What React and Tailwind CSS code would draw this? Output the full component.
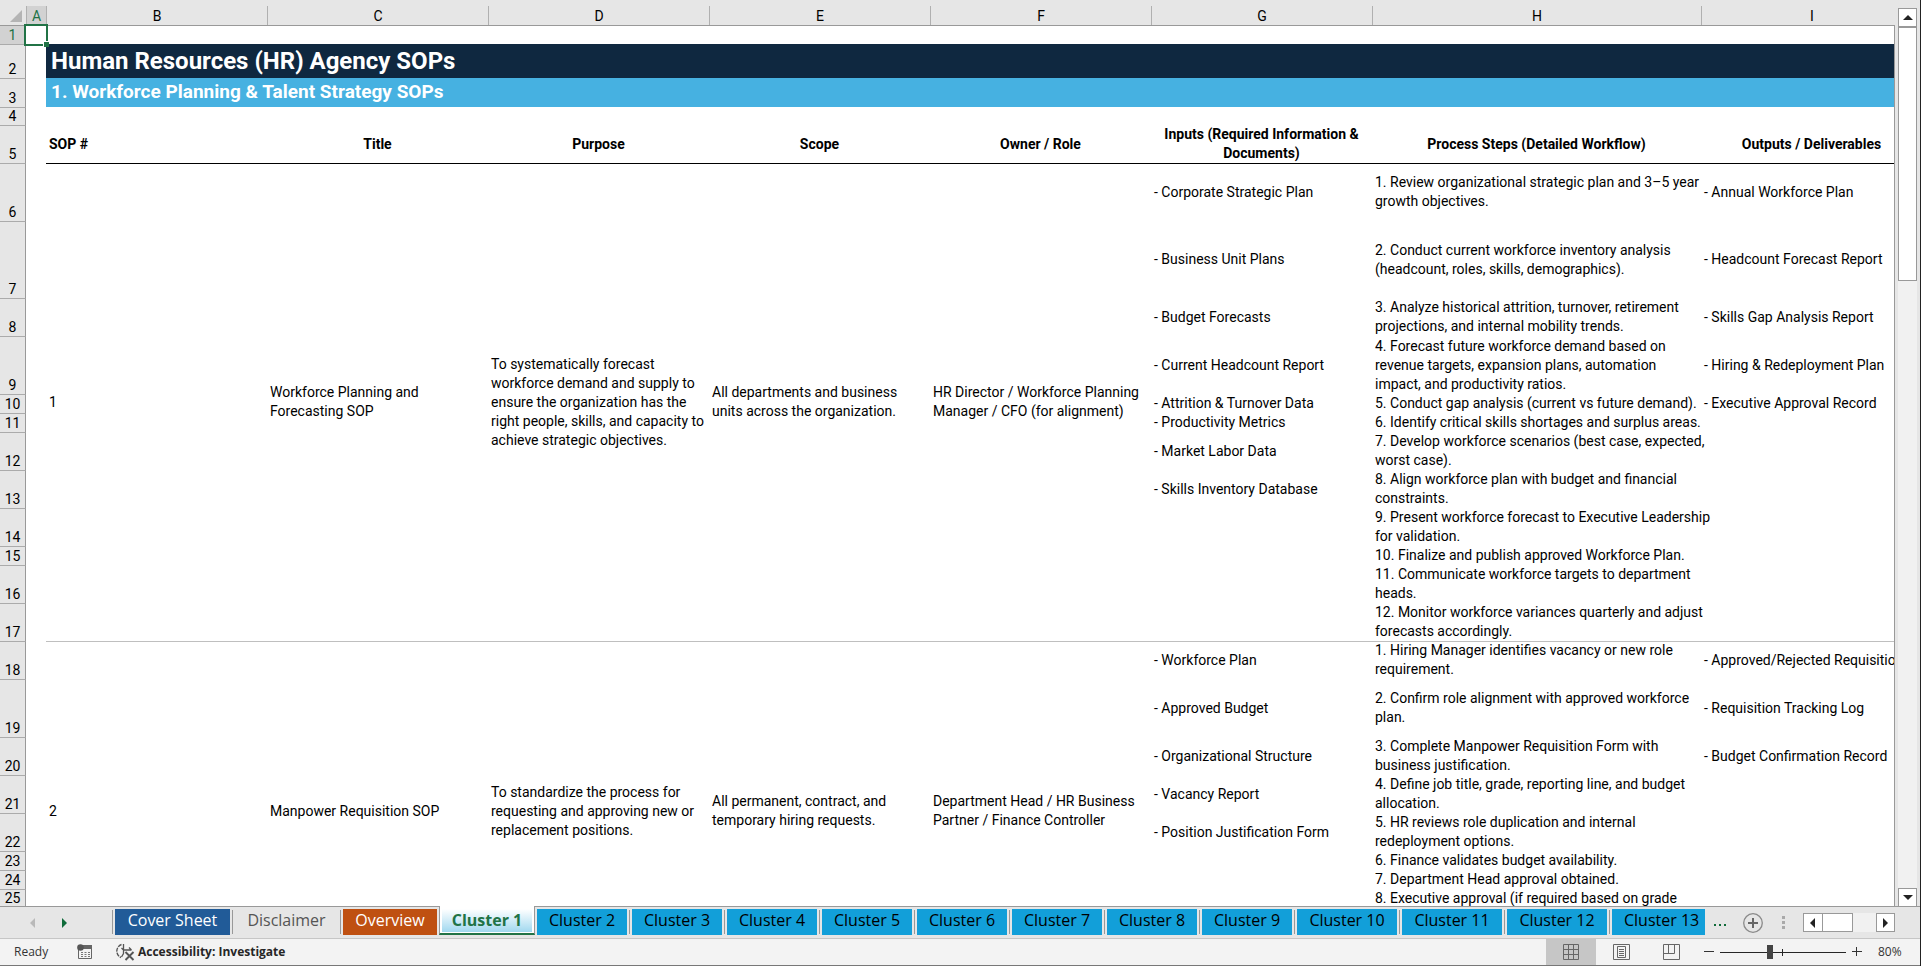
import React from "react";
import clsx from "clsx";

const COLUMNS = ["A", "B", "C", "D", "E", "F", "G", "H", "I"];

const HEADINGS = [
  "Title",
  "Purpose",
  "Scope",
  "Owner / Role",
  "Inputs (Required Information &\nDocuments)",
  "Process Steps (Detailed Workflow)",
  "Outputs / Deliverables",
];

// Each SOP is one merged block (B:F) next to one row per process step (G:I)
const SOPS = [
  {
    id: 1,
    title: "Workforce Planning and\nForecasting SOP",
    purpose:
      "To systematically forecast\nworkforce demand and supply to\nensure the organization has the\nright people, skills, and capacity to\nachieve strategic objectives.",
    scope: "All departments and business\nunits across the organization.",
    owner: "HR Director / Workforce Planning\nManager / CFO (for alignment)",
    rows: [
      { n: 6, h: "h-[58px]", input: "- Corporate Strategic Plan", step: "1. Review organizational strategic plan and 3–5 year\ngrowth objectives.", output: "- Annual Workforce Plan" },
      { n: 7, h: "h-[77px]", input: "- Business Unit Plans", step: "2. Conduct current workforce inventory analysis\n(headcount, roles, skills, demographics).", output: "- Headcount Forecast Report" },
      { n: 8, h: "h-[38px]", input: "- Budget Forecasts", step: "3. Analyze historical attrition, turnover, retirement\nprojections, and internal mobility trends.", output: "- Skills Gap Analysis Report" },
      { n: 9, h: "h-[58px]", input: "- Current Headcount Report", step: "4. Forecast future workforce demand based on\nrevenue targets, expansion plans, automation\nimpact, and productivity ratios.", output: "- Hiring & Redeployment Plan" },
      { n: 10, h: "h-[19px]", input: "- Attrition & Turnover Data", step: "5. Conduct gap analysis (current vs future demand).", output: "- Executive Approval Record" },
      { n: 11, h: "h-[19px]", input: "- Productivity Metrics", step: "6. Identify critical skills shortages and surplus areas." },
      { n: 12, h: "h-[38px]", input: "- Market Labor Data", step: "7. Develop workforce scenarios (best case, expected,\nworst case)." },
      { n: 13, h: "h-[38px]", input: "- Skills Inventory Database", step: "8. Align workforce plan with budget and financial\nconstraints." },
      { n: 14, h: "h-[38px]", step: "9. Present workforce forecast to Executive Leadership\nfor validation." },
      { n: 15, h: "h-[19px]", step: "10. Finalize and publish approved Workforce Plan." },
      { n: 16, h: "h-[38px]", step: "11. Communicate workforce targets to department\nheads." },
      { n: 17, h: "h-[38px]", step: "12. Monitor workforce variances quarterly and adjust\nforecasts accordingly." },
    ],
  },
  {
    id: 2,
    title: "Manpower Requisition SOP",
    purpose: "To standardize the process for\nrequesting and approving new or\nreplacement positions.",
    scope: "All permanent, contract, and\ntemporary hiring requests.",
    owner: "Department Head / HR Business\nPartner / Finance Controller",
    rows: [
      { n: 18, h: "h-[38px]", input: "- Workforce Plan", step: "1. Hiring Manager identifies vacancy or new role\nrequirement.", output: "- Approved/Rejected Requisition" },
      { n: 19, h: "h-[58px]", input: "- Approved Budget", step: "2. Confirm role alignment with approved workforce\nplan.", output: "- Requisition Tracking Log" },
      { n: 20, h: "h-[38px]", input: "- Organizational Structure", step: "3. Complete Manpower Requisition Form with\nbusiness justification.", output: "- Budget Confirmation Record" },
      { n: 21, h: "h-[38px]", input: "- Vacancy Report", step: "4. Define job title, grade, reporting line, and budget\nallocation." },
      { n: 22, h: "h-[38px]", input: "- Position Justification Form", step: "5. HR reviews role duplication and internal\nredeployment options." },
      { n: 23, h: "h-[19px]", step: "6. Finance validates budget availability." },
      { n: 24, h: "h-[19px]", step: "7. Department Head approval obtained." },
      { n: 25, h: "h-[92px]", top: true, step: "8. Executive approval (if required based on grade" },
    ],
  },
];

const TABS = [
  { name: "Cover Sheet", look: "w-[115px] bg-[#215b98] text-white" },
  { name: "Disclaimer", look: "w-[103px] text-[#555555]" },
  { name: "Overview", look: "w-[94px] bg-[#bf5011] text-white" },
  { name: "Cluster 1", active: true },
  { name: "Cluster 2", look: "w-[90px] bg-[#129fd9]", first: true },
  { name: "Cluster 3", look: "w-[90px] bg-[#129fd9]" },
  { name: "Cluster 4", look: "w-[90px] bg-[#129fd9]" },
  { name: "Cluster 5", look: "w-[90px] bg-[#129fd9]" },
  { name: "Cluster 6", look: "w-[90px] bg-[#129fd9]" },
  { name: "Cluster 7", look: "w-[90px] bg-[#129fd9]" },
  { name: "Cluster 8", look: "w-[90px] bg-[#129fd9]" },
  { name: "Cluster 9", look: "w-[90px] bg-[#129fd9]" },
  { name: "Cluster 10", look: "w-[100px] bg-[#129fd9]" },
  { name: "Cluster 11", look: "w-[100px] bg-[#129fd9]" },
  { name: "Cluster 12", look: "w-[100px] bg-[#129fd9]" },
  { name: "Cluster 13", look: "w-[93px] bg-[#129fd9] pl-3 text-left" },
];

const Arrow = ({ dir, className }) => {
  const shapes = {
    up: "0,7 10,7 5,2",
    down: "0,2 10,2 5,7",
    left: "7,0 7,10 2,5",
    right: "2,0 2,10 7,5",
  };
  return (
    <svg viewBox="0 0 10 10" className={clsx("size-[10px]", className)} fill="currentColor">
      <polygon points={shapes[dir]} />
    </svg>
  );
};

const RowNumber = ({ n, selected, top }) => (
  <th
    scope="row"
    className={clsx(
      "border-r border-t border-r-[#999999] p-0 text-center font-normal leading-[17px]",
      top ? "align-top" : "align-bottom",
      selected ? "border-t-[#d2d2d2] bg-[#d2d2d2] text-[#217346]" : "border-t-[#ababab] bg-[#e6e6e6]"
    )}
  >
    {n}
  </th>
);

const SopBlock = ({ sop, line }) => {
  const merged = [sop.id, sop.title, sop.purpose, sop.scope, sop.owner];
  return sop.rows.map((row, i) => {
    const cell = clsx("px-[3px] py-0", row.top ? "align-top" : "align-middle", i === 0 && line);
    return (
      <tr key={row.n} className={row.h}>
        <RowNumber n={row.n} top={row.top} />
        <td className="p-0"></td>
        {i === 0 &&
          merged.map((text, m) => (
            <td key={m} rowSpan={sop.rows.length} className={clsx("px-[3px] py-0 align-middle", line)}>
              {text}
            </td>
          ))}
        <td className={cell}>{row.input}</td>
        <td className={cell}>{row.step}</td>
        <td className={cell}>{row.output}</td>
      </tr>
    );
  });
};

const Sheet = () => (
  <table className="w-[1922px] table-fixed border-separate border-spacing-0 whitespace-pre text-left font-[Roboto,sans-serif] text-[14px] leading-[19px] text-black">
    <colgroup>
      <col className="w-[26px]" />
      <col className="w-[20px]" />
      <col span={6} className="w-[221px]" />
      <col className="w-[329px]" />
      <col className="w-[221px]" />
    </colgroup>
    <thead>
      <tr className="h-[26px] bg-[#e6e6e6]">
        <td className="border-b border-[#999999] p-0">
          <svg viewBox="0 0 26 25" className="block h-[25px] w-[26px]">
            <polygon points="22,10 22,22 10,22" fill="#b4b4b4" />
          </svg>
        </td>
        {COLUMNS.map((c) => (
          <th key={c} scope="col" className="border-b border-[#999999] p-0 pt-[6px] text-center font-normal">
            <div className={clsx("h-[19px] border-l border-[#b0b0b0] leading-[21px]", c === "A" && "bg-[#d2d2d2] text-[#217346]")}>{c}</div>
          </th>
        ))}
      </tr>
    </thead>
    <tbody>
      <tr className="h-[18px]">
        <RowNumber n={1} selected />
        <td className="relative p-0">
          {/* active cell outline and fill handle */}
          <span className="absolute -left-[2px] -top-[2px] z-10 h-[22px] w-[24px] border-2 border-[#217346]"></span>
          <span className="absolute -bottom-[3px] -right-[3px] z-10 size-[6px] border-l border-t border-white bg-[#217346]"></span>
        </td>
        <td colSpan={8} className="p-0"></td>
      </tr>
      <tr className="h-[34px]">
        <RowNumber n={2} />
        <td className="p-0"></td>
        <td colSpan={8} className="bg-[#0f2840] py-0 pl-[5px] text-[24px] font-bold leading-[34px] text-white">
          Human Resources (HR) Agency SOPs
        </td>
      </tr>
      <tr className="h-[29px]">
        <RowNumber n={3} />
        <td className="p-0"></td>
        <td colSpan={8} className="bg-[#46b1e1] py-0 pl-[5px] align-top text-[19px] font-bold leading-[28px] text-white">
          1. Workforce Planning &amp; Talent Strategy SOPs
        </td>
      </tr>
      <tr className="h-[18px]">
        <RowNumber n={4} />
        <td colSpan={9} className="p-0"></td>
      </tr>
      <tr className="h-[38px] text-center font-bold">
        <RowNumber n={5} />
        <td className="p-0"></td>
        <td className="px-[3px] py-0 text-left align-middle">SOP #</td>
        {HEADINGS.map((h) => (
          <td key={h} className="p-0 align-middle">
            {h}
          </td>
        ))}
      </tr>
      <SopBlock sop={SOPS[0]} line="shadow-[inset_0_1px_#000000]" />
      <SopBlock sop={SOPS[1]} line="shadow-[inset_0_1px_#bfbfbf]" />
    </tbody>
  </table>
);

const VerticalScroll = () => (
  <div className="flex w-[25px] flex-none flex-col px-[3px] pt-2">
    <button aria-label="Scroll up" className="flex h-[19px] items-center justify-center border border-[#999999] bg-white text-[#222222]">
      <Arrow dir="up" />
    </button>
    <div className="flex-1 bg-[#f1f1f1]">
      <div className="h-[254px] border border-[#999999] bg-white"></div>
    </div>
    <button aria-label="Scroll down" className="flex h-[18px] items-center justify-center border border-b-0 border-[#999999] bg-white text-[#222222]">
      <Arrow dir="down" />
    </button>
  </div>
);

const SheetTab = ({ tab }) => {
  if (tab.active) {
    return (
      <button className="-mr-px h-[29px] w-[96px] flex-none border-x border-b-2 border-x-[#999999] border-b-[#217346] bg-white px-[2px] pb-px pt-[3px] font-bold text-[#217346]">
        <span className="block h-[23px] bg-gradient-to-b from-white to-[#a0d8ef] leading-[22px]">{tab.name}</span>
      </button>
    );
  }
  return (
    <div className="flex flex-none pt-[3px]">
      <span className={clsx("mt-px h-6 w-px", tab.first ? "bg-transparent" : "bg-[#999999]")}></span>
      <button className={clsx("mx-[2px] h-[26px] flex-none leading-[22px]", tab.look)}>
        <span className="block h-[26px]">{tab.name}</span>
      </button>
    </div>
  );
};

const TabStrip = () => (
  <div className="flex h-[33px] flex-none border-b border-t border-b-[#c6c6c6] border-t-[#999999] bg-[#e6e6e6] text-black">
    <div className="flex w-[112px] flex-none items-center gap-[22px] pl-7">
      <button aria-label="Previous sheets" className="text-[#b9b9b9]">
        <Arrow dir="left" />
      </button>
      <button aria-label="Next sheets" className="text-[#0f6b3a]">
        <Arrow dir="right" />
      </button>
    </div>
    <div className="-mt-px flex min-w-0 flex-1 overflow-hidden whitespace-nowrap text-[16px]">
      {TABS.map((tab) => (
        <SheetTab key={tab.name} tab={tab} />
      ))}
    </div>
    <div className="flex flex-none items-center pr-[25px]">
      <button aria-label="More sheets" className="mr-4 text-[#0f6b3a]">
        <svg viewBox="0 0 14 12" className="h-3 w-[14px]" fill="currentColor">
          <rect x="1" y="7" width="2" height="2" />
          <rect x="6" y="7" width="2" height="2" />
          <rect x="11" y="7" width="2" height="2" />
        </svg>
      </button>
      <button aria-label="New sheet" className="mr-[19px]">
        <svg viewBox="0 0 20 20" className="size-5" fill="none" stroke="#8a8a8a">
          <circle cx="10" cy="10" r="9.3" strokeWidth="1.3" />
          <path d="M10 5v10M5 10h10" stroke="#666666" strokeWidth="2" />
        </svg>
      </button>
      <svg viewBox="0 0 3 13" className="mr-[18px] h-[13px] w-[3px]" fill="#a9a9a9">
        <rect width="3" height="3" />
        <rect y="5" width="3" height="3" />
        <rect y="10" width="3" height="3" />
      </svg>
      <div className="flex h-[19px] w-[92px] bg-[#f1f1f1]">
        <button aria-label="Scroll left" className="flex w-5 items-center justify-center border border-[#999999] bg-white text-[#222222]">
          <Arrow dir="left" />
        </button>
        <div className="-ml-px w-[31px] border border-[#999999] bg-white"></div>
        <button aria-label="Scroll right" className="ml-auto flex w-[19px] items-center justify-center border border-[#999999] bg-white text-[#222222]">
          <Arrow dir="right" />
        </button>
      </div>
    </div>
  </div>
);

const StatusBar = () => (
  <div className="flex h-[27px] flex-none items-center border-b border-[#777777] bg-[#f3f3f3] text-[12px] leading-4 text-[#333333]">
    <span className="w-[77px] pl-[14px]">Ready</span>
    <button aria-label="Record macro" className="w-[39px]">
      <svg viewBox="0 0 16 16" className="size-4">
        <path d="M6 1h9v4H2z" fill="#666666" />
        <path d="M1.5 6v8.5h13V4" fill="none" stroke="#666666" />
        <circle cx="3.5" cy="3.5" r="3.3" fill="#555555" />
        <path d="M4 8.5h2m1.500 0h2m1.500 0h2M4 10.500h2m1.500 0h2m1.500 0h2M4 12.500h2m1.500 0h2m1.500 0h2" stroke="#777777" />
      </svg>
    </button>
    <button className="flex items-center gap-[3px] font-bold text-[#262626]">
      <svg viewBox="0 0 19 18" className="h-[18px] w-[19px]" fill="none" stroke="#555555">
        <path d="M5.500 1.500A7 7 0 0 0 5 14.500" strokeWidth="1.400" strokeDasharray="4 1" />
        <path d="M7.500 1v6h8M13 4.500l2.500 2.500M7.500 7v3.500l-2 3.500M5.500 5l2 2" strokeWidth="1.300" />
        <path d="M9.500 9l8 8M17.500 9l-8 8" strokeWidth="1.900" />
      </svg>
      Accessibility: Investigate
    </button>

    <div className="ml-auto flex h-full items-center">
      <button aria-label="Normal view" className="flex h-full w-[50px] items-center justify-center bg-[#c6c6c6]">
        <svg viewBox="0 0 16 16" className="size-4" fill="none" stroke="#666666">
          <path d="M.5 .5h15v15H.5zM5.500 .5v15M10.500 .5v15M.5 5.500h15M.5 10.500h15" />
        </svg>
      </button>
      <button aria-label="Page layout" className="flex h-full w-[50px] items-center justify-center">
        <svg viewBox="0 0 17 16" className="h-4 w-[17px]" fill="none" stroke="#666666">
          <path d="M.5 .5h16v15H.5zM4.500 2.500h8v11h-8zM6 5.500h5M6 7.500h5M6 9.500h5M6 11.500h5" />
        </svg>
      </button>
      <button aria-label="Page break preview" className="flex h-full w-[50px] items-center justify-center">
        <svg viewBox="0 0 17 16" className="h-4 w-[17px]" fill="none" stroke="#666666">
          <path d="M.5 .5h16v15H.5zM.5 9.500h11M5.500 .5v9M11.500 .5v9" />
        </svg>
      </button>
      <button aria-label="Zoom out" className="ml-2 flex w-[10px]">
        <svg viewBox="0 0 10 10" className="size-[10px]" stroke="#333333">
          <path d="M0 4.500h10" />
        </svg>
      </button>
      <div className="relative mx-[6px] flex items-center">
        <span className="absolute left-[62px] h-[7px] w-px bg-[#262626]"></span>
        <input
          type="range"
          aria-label="Zoom"
          min="10"
          max="190"
          defaultValue="80"
          className="h-[14px] w-[126px] appearance-none bg-transparent [&::-webkit-slider-runnable-track]:h-px [&::-webkit-slider-runnable-track]:bg-[#262626] [&::-webkit-slider-thumb]:mt-[-7px] [&::-webkit-slider-thumb]:h-[14px] [&::-webkit-slider-thumb]:w-[6px] [&::-webkit-slider-thumb]:appearance-none [&::-webkit-slider-thumb]:bg-[#444444]"
        />
      </div>
      <button aria-label="Zoom in" className="flex w-[10px]">
        <svg viewBox="0 0 10 10" className="size-[10px]" stroke="#333333">
          <path d="M0 4.500h10M4.500 0v9" />
        </svg>
      </button>
      <span className="ml-4 w-[42px]">80%</span>
    </div>
  </div>
);

const App = () => {
  return (
    <div className="flex h-screen flex-col overflow-hidden border-r border-[#222222] bg-[#e6e6e6] font-['Open_Sans',sans-serif]">
      <div className="flex min-h-0 flex-1">
        <div className="min-w-0 flex-1 overflow-hidden bg-[linear-gradient(#e6e6e6_26px,#ffffff_26px)]">
          <Sheet />
        </div>
        <div className="mt-[25px] w-px flex-none bg-[#999999]"></div>
        <VerticalScroll />
      </div>
      <TabStrip />
      <StatusBar />
    </div>
  );
};

export default App;
